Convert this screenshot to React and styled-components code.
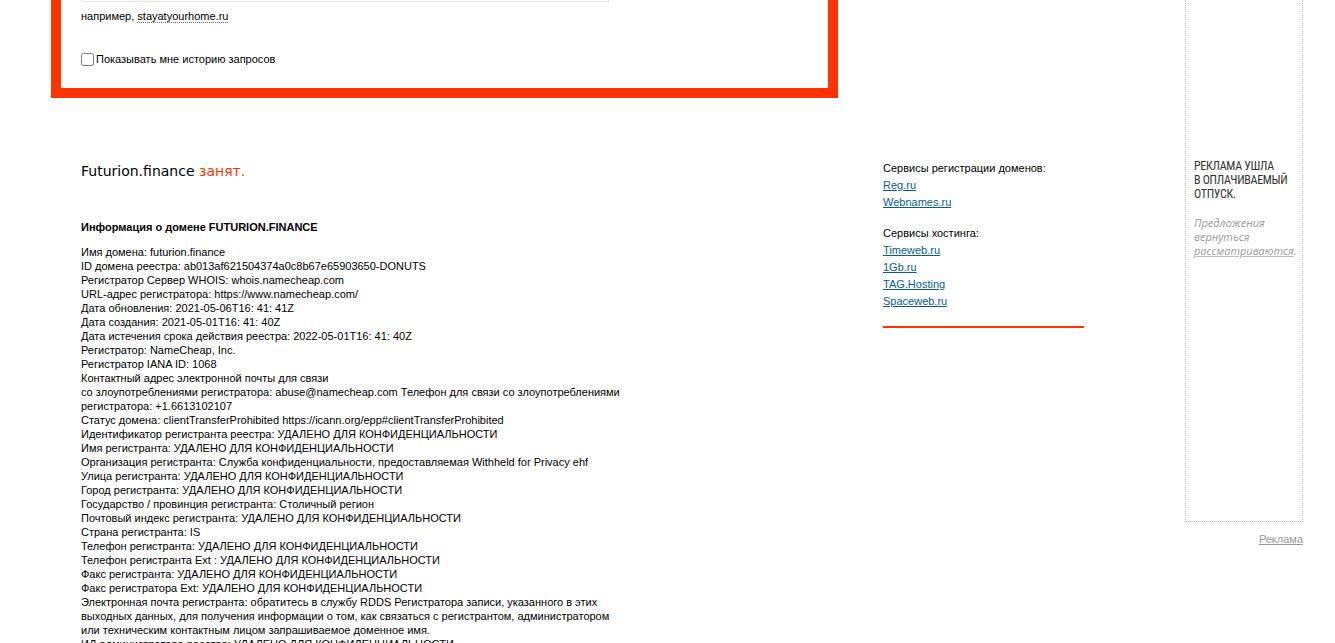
import React from "react";
import styled, { createGlobalStyle } from "styled-components";

const GlobalStyle = createGlobalStyle`
  html, body {
    margin: 0;
    padding: 0;
    background: #fff;
  }
  body {
    font-family: "Liberation Sans", Arial, sans-serif;
    font-size: 11px;
    color: #000;
  }
`;

const Page = styled.div`
  display: flex;
  width: 1335px;
  min-height: 643px;
  overflow: hidden;
`;

const Main = styled.div`
  flex: 1;
  display: flex;
  flex-direction: column;
`;

const SearchBox = styled.div`
  margin-left: 51px;
  width: 727px;
  border: 10px solid #ff3300;
  border-top: none;
  padding: 0 20px 22px;
`;

const InputEdge = styled.div`
  width: 526px;
  height: 1px;
  border: 1px solid #e3e3e3;
  border-top: none;
`;

const Hint = styled.div`
  margin-top: 7px;
  line-height: 14px;
  color: #000;

  span {
    border-bottom: 1px dotted #666;
  }
`;

const CheckRow = styled.label`
  display: flex;
  align-items: center;
  margin-top: 29px;
  line-height: 14px;

  input {
    margin: 0 2px 0 0;
    width: 13px;
    height: 13px;
  }
`;

const Result = styled.div`
  display: flex;
  padding-left: 81px;
  margin-top: 64px;
`;

const Info = styled.div`
  width: 540px;
`;

const Heading = styled.h1`
  margin: 0;
  font-family: "DejaVu Sans", sans-serif;
  font-weight: normal;
  font-size: 14px;
  line-height: 18px;

  em {
    font-style: normal;
    color: #ff3300;
  }
`;

const Title = styled.h2`
  margin: 40px 0 0;
  font-size: 11px;
  font-weight: bold;
  line-height: 14px;
`;

const Lines = styled.div`
  margin-top: 11px;
  line-height: 14px;
`;

const Side = styled.div`
  margin-left: 262px;
  margin-top: -3px;
  width: 201px;
`;

const Group = styled.div`
  & + & {
    margin-top: 13px;
  }
`;

const GroupTitle = styled.div`
  line-height: 18px;
`;

const SideLink = styled.a`
  display: block;
  width: fit-content;
  line-height: 17px;
  color: #0a5a8f;
  text-decoration: underline;
`;

const RedRule = styled.div`
  margin-top: 16px;
  height: 2px;
  background: #ff3300;
`;

const AdColumn = styled.div`
  width: 118px;
  margin-right: 32px;
  display: flex;
  flex-direction: column;
  align-items: flex-end;
`;

const AdBox = styled.div`
  box-sizing: border-box;
  width: 118px;
  height: 522px;
  border: 1px dotted #bbb;
  border-top: none;
  padding: 159px 8px 0 8px;
`;

const AdTitle = styled.div`
  font-family: "Liberation Sans Narrow", "Roboto", sans-serif;
  font-stretch: condensed;
  font-size: 12px;
  line-height: 14px;
  color: #333;
  letter-spacing: -0.3px;
  text-transform: uppercase;
`;

const AdNote = styled.div`
  margin-top: 15px;
  font-family: "Open Sans", sans-serif;
  font-style: italic;
  font-size: 11px;
  line-height: 14px;
  color: #999;

  u {
    text-decoration-color: #bbb;
  }
`;

const AdLink = styled.a`
  margin-top: 10px;
  font-size: 11px;
  line-height: 14px;
  color: #999;
  text-decoration: underline;
`;

const lines = [
  "Имя домена: futurion.finance",
  "ID домена реестра: ab013af621504374a0c8b67e65903650-DONUTS",
  "Регистратор Сервер WHOIS: whois.namecheap.com",
  "URL-адрес регистратора: https://www.namecheap.com/",
  "Дата обновления: 2021-05-06T16: 41: 41Z",
  "Дата создания: 2021-05-01T16: 41: 40Z",
  "Дата истечения срока действия реестра: 2022-05-01T16: 41: 40Z",
  "Регистратор: NameCheap, Inc.",
  "Регистратор IANA ID: 1068",
  "Контактный адрес электронной почты для связи",
  "со злоупотреблениями регистратора: abuse@namecheap.com Телефон для связи со злоупотреблениями регистратора: +1.6613102107",
  "Статус домена: clientTransferProhibited https://icann.org/epp#clientTransferProhibited",
  "Идентификатор регистранта реестра: УДАЛЕНО ДЛЯ КОНФИДЕНЦИАЛЬНОСТИ",
  "Имя регистранта: УДАЛЕНО ДЛЯ КОНФИДЕНЦИАЛЬНОСТИ",
  "Организация регистранта: Служба конфиденциальности, предоставляемая Withheld for Privacy ehf",
  "Улица регистранта: УДАЛЕНО ДЛЯ КОНФИДЕНЦИАЛЬНОСТИ",
  "Город регистранта: УДАЛЕНО ДЛЯ КОНФИДЕНЦИАЛЬНОСТИ",
  "Государство / провинция регистранта: Столичный регион",
  "Почтовый индекс регистранта: УДАЛЕНО ДЛЯ КОНФИДЕНЦИАЛЬНОСТИ",
  "Страна регистранта: IS",
  "Телефон регистранта: УДАЛЕНО ДЛЯ КОНФИДЕНЦИАЛЬНОСТИ",
  "Телефон регистранта Ext : УДАЛЕНО ДЛЯ КОНФИДЕНЦИАЛЬНОСТИ",
  "Факс регистранта: УДАЛЕНО ДЛЯ КОНФИДЕНЦИАЛЬНОСТИ",
  "Факс регистратора Ext: УДАЛЕНО ДЛЯ КОНФИДЕНЦИАЛЬНОСТИ",
  "Электронная почта регистранта: обратитесь в службу RDDS Регистратора записи, указанного в этих выходных данных, для получения информации о том, как связаться с регистрантом, администратором или техническим контактным лицом запрашиваемое доменное имя.",
  "ИД администратора реестра: УДАЛЕНО ДЛЯ КОНФИДЕНЦИАЛЬНОСТИ",
];

const App = () => {
  return (
    <>
      <GlobalStyle />
      <Page>
        <Main>
          <SearchBox>
            <InputEdge />
            <Hint>
              например, <span>stayatyourhome.ru</span>
            </Hint>
            <CheckRow>
              <input type="checkbox" />
              Показывать мне историю запросов
            </CheckRow>
          </SearchBox>

          <Result>
            <Info>
              <Heading>
                Futurion.finance <em>занят.</em>
              </Heading>
              <Title>Информация о домене FUTURION.FINANCE</Title>
              <Lines>
                {lines.map((line, i) => (
                  <div key={i}>{line}</div>
                ))}
              </Lines>
            </Info>

            <Side>
              <Group>
                <GroupTitle>Сервисы регистрации доменов:</GroupTitle>
                <SideLink href="#">Reg.ru</SideLink>
                <SideLink href="#">Webnames.ru</SideLink>
              </Group>
              <Group>
                <GroupTitle>Сервисы хостинга:</GroupTitle>
                <SideLink href="#">Timeweb.ru</SideLink>
                <SideLink href="#">1Gb.ru</SideLink>
                <SideLink href="#">TAG.Hosting</SideLink>
                <SideLink href="#">Spaceweb.ru</SideLink>
              </Group>
              <RedRule />
            </Side>
          </Result>
        </Main>

        <AdColumn>
          <AdBox>
            <AdTitle>
              Реклама ушла
              <br />в оплачиваемый
              <br />
              отпуск.
            </AdTitle>
            <AdNote>
              Предложения
              <br />
              вернуться
              <br />
              <u>рассматриваются</u>.
            </AdNote>
          </AdBox>
          <AdLink href="#">Реклама</AdLink>
        </AdColumn>
      </Page>
    </>
  );
};

export default App;
